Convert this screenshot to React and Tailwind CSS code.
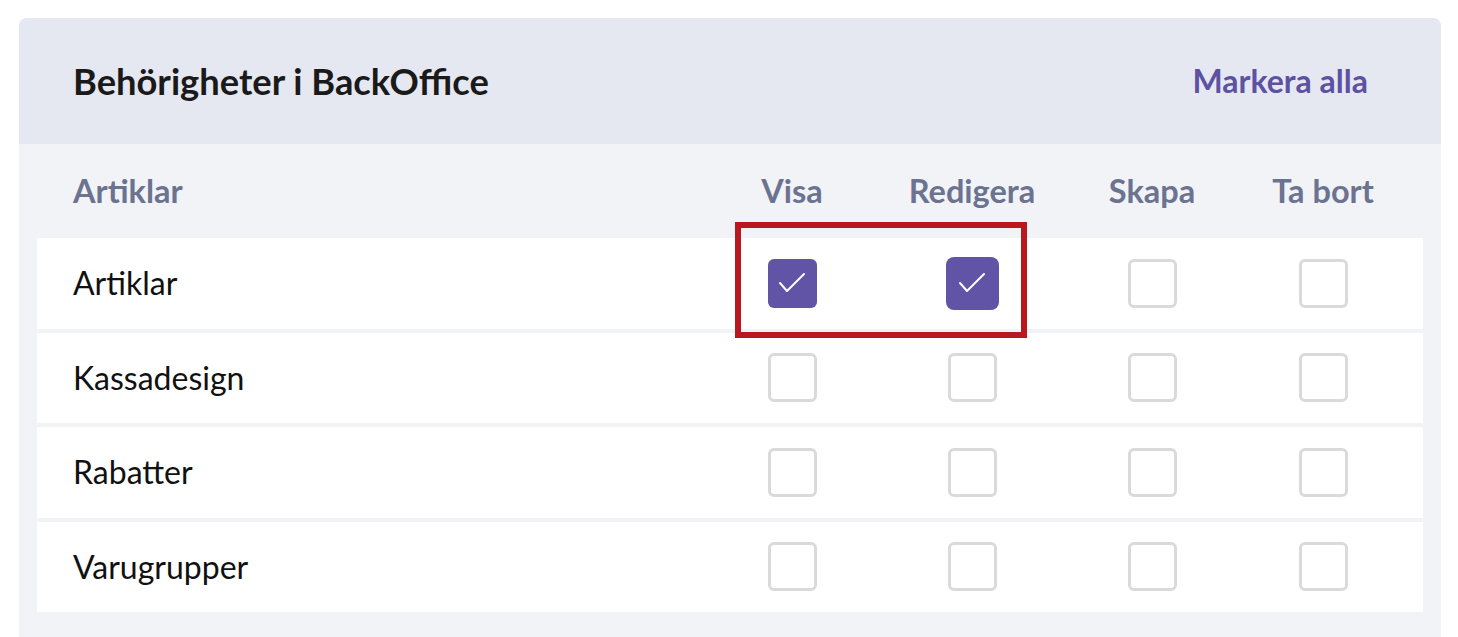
import { useState } from "react";

const columns = ["Visa", "Redigera", "Skapa", "Ta bort"];

const initialRows = [
  { name: "Artiklar", checked: [true, true, false, false] },
  { name: "Kassadesign", checked: [false, false, false, false] },
  { name: "Rabatter", checked: [false, false, false, false] },
  { name: "Varugrupper", checked: [false, false, false, false] },
];

function Checkbox({ checked, big, onClick }) {
  if (checked) {
    return (
      <button
        onClick={onClick}
        className={`${big ? "w-[53px] h-[53px] rounded-[8px]" : "w-[49px] h-[49px] rounded-[6px]"} bg-[#6153a5] flex items-center justify-center`}
      >
        <svg width="28" height="22" viewBox="0 0 28 22" fill="none">
          <polyline points="2,11 9,19 26,2" stroke="white" strokeWidth="2" strokeLinecap="round" strokeLinejoin="round" />
        </svg>
      </button>
    );
  }
  return (
    <button
      onClick={onClick}
      className="w-[49px] h-[49px] rounded-[6px] border-[3px] border-[#dadada] bg-white"
    />
  );
}

export default function App() {
  const [rows, setRows] = useState(initialRows);

  const toggle = (r, c) => {
    setRows(rows.map((row, i) => (i === r ? { ...row, checked: row.checked.map((v, j) => (j === c ? !v : v)) } : row)));
  };

  return (
    <div className="min-h-screen bg-white pt-[18px] px-[19px] overflow-hidden" style={{ fontFamily: "Lato, 'Noto Sans', sans-serif" }}>
      <div className="relative w-[1422px] rounded-t-[8px] overflow-hidden bg-[#f2f3f7]">
        <div className="h-[126px] bg-[#e6e8f1] flex items-center justify-between pl-[54px] pr-[73px]">
          <h1 className="text-[36.3px] font-bold text-[#1a1a1a]">Behörigheter i BackOffice</h1>
          <button className="text-[32px] font-bold text-[#5d51a3]">Markera alla</button>
        </div>

        <div className="px-[18px] pb-[40px]">
          <div className="h-[94px] grid grid-cols-[1fr_180px_180px_180px_162px] items-center pl-[36px] pr-[19px] text-[32.5px] font-bold text-[#6b7391]">
            <span>Artiklar</span>
            {columns.map((c) => (
              <span key={c} className="text-center">{c}</span>
            ))}
          </div>

          <div className="flex flex-col gap-[4px]">
            {rows.map((row, r) => (
              <div key={row.name} className="h-[90.5px] bg-white grid grid-cols-[1fr_180px_180px_180px_162px] items-center pl-[36px] pr-[19px]">
                <span className="text-[32px] text-[#111111]">{row.name}</span>
                {row.checked.map((v, c) => (
                  <div key={c} className="flex justify-center">
                    <Checkbox checked={v} big={r === 0 && c === 1} onClick={() => toggle(r, c)} />
                  </div>
                ))}
              </div>
            ))}
          </div>
        </div>

        <div className="absolute left-[716px] top-[204px] w-[292px] h-[116px] border-[6px] border-[#b9191e] pointer-events-none" />
      </div>
    </div>
  );
}
